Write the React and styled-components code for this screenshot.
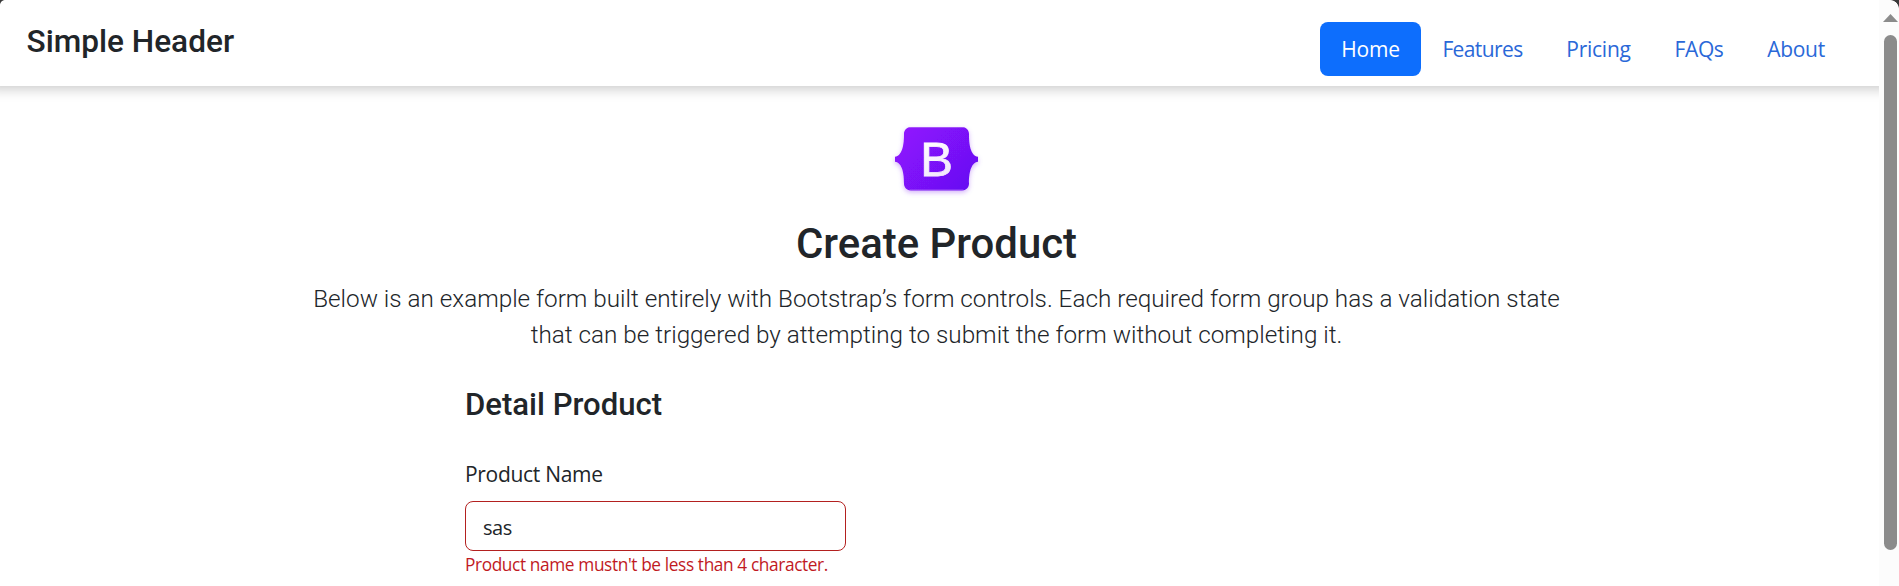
import React from "react";
import styled, { createGlobalStyle } from "styled-components";

const GlobalStyle = createGlobalStyle`
  * { box-sizing: border-box; }
  body { margin: 0; background: #fff; color: #212529; font-family: Roboto, "Liberation Sans", sans-serif; overflow: hidden; }
  h1, h2, h3, p { margin: 0; }
`;

const Window = styled.div`
  position: relative;
  display: flex;
  height: 586px;
  overflow: hidden;
`;

const Page = styled.div`
  flex: 1;
  min-width: 0;
  overflow: hidden;
`;

const Header = styled.header`
  display: flex;
  justify-content: space-between;
  align-items: flex-start;
  height: 86px;
  padding: 22px 32px 0 26.5px;
  background: #fff;
  box-shadow: 0 -9px 12px 12px rgba(0, 0, 0, 0.21);
`;

const Brand = styled.h1`
  margin-top: 1px;
  font-size: 31.6px;
  font-weight: 500;
  line-height: 38px;
`;

const Nav = styled.nav`
  display: flex;
`;

const NavLink = styled.a`
  display: flex;
  align-items: center;
  justify-content: center;
  width: ${(p) => p.$width}px;
  height: 54px;
  border-radius: 8px;
  background: ${(p) => (p.$active ? "#0d6efd" : "transparent")};
  color: ${(p) => (p.$active ? "#fff" : "#2a68d8")};
  font: 21px/32px "Open Sans", "Noto Sans", sans-serif;
  letter-spacing: ${(p) => p.$spacing}px;
  text-decoration: none;
`;

const Main = styled.main`
  display: flex;
  flex-direction: column;
  align-items: center;
  padding: 35px 6px 0 0;
`;

const Logo = styled.svg`
  display: block;
  width: 104px;
  height: 84px;
`;

const Title = styled.h2`
  margin-top: 14px;
  font-size: 41.9px;
  font-weight: 500;
  line-height: 50px;
`;

const Lead = styled.p`
  width: 1290px;
  margin-top: 12px;
  font-size: 24.28px;
  font-weight: 300;
  line-height: 36px;
  text-align: center;
`;

const Form = styled.form`
  display: flex;
  flex-direction: column;
  width: 943px;
  margin-top: 33px;
`;

const SectionTitle = styled.h3`
  font-size: 31.1px;
  font-weight: 500;
  line-height: 38px;
`;

const Label = styled.label`
  margin-top: 34px;
  font: 21px/32px "Open Sans", "Noto Sans", sans-serif;
  letter-spacing: -0.3px;
`;

const Input = styled.input`
  width: 381px;
  height: 50px;
  margin-top: 11px;
  padding: 2px 17px 0;
  border: 1px solid #b3201f;
  border-radius: 8px;
  outline: none;
  background: #fff;
  color: #212529;
  font: 20px/32px "Open Sans", "Noto Sans", sans-serif;
  letter-spacing: -0.5px;
`;

const ErrorText = styled.p`
  margin-top: 1px;
  color: #c11a1f;
  font: 17.3px/26px "Open Sans", "Noto Sans", sans-serif;
  letter-spacing: -0.39px;
`;

const Scrollbar = styled.div`
  display: flex;
  flex-direction: column;
  align-items: center;
  width: 20px;
  padding: 14px 0 0 3px;
  background: #fcfcfc;
`;

const UpArrow = styled.svg`
  display: block;
  width: 15px;
  height: 8px;
`;

const Thumb = styled.div`
  width: 13px;
  height: 515px;
  margin-top: 13px;
  border-radius: 7px;
  background: #8b8b8b;
`;

const Corner = styled.div`
  position: absolute;
  top: 0;
  ${(p) => p.$side}: 0;
  width: ${(p) => p.$size}px;
  height: ${(p) => p.$size}px;
  background: radial-gradient(
    circle at ${(p) => (p.$side === "left" ? "100%" : "0")} 100%,
    transparent ${(p) => p.$size - 0.5}px,
    #3a3a3a ${(p) => p.$size + 0.3}px
  );
`;

const links = [
  { label: "Home", width: 101, spacing: -0.2, active: true },
  { label: "Features", width: 123, spacing: -0.6 },
  { label: "Pricing", width: 109, spacing: -0.25 },
  { label: "FAQs", width: 92, spacing: -0.4 },
  { label: "About", width: 102, spacing: -0.3 },
];

function BootstrapLogo() {
  return (
    <Logo viewBox="0 0 104 84" aria-label="Bootstrap">
      <defs>
        <linearGradient id="body" x1="20" y1="8" x2="84" y2="72" gradientUnits="userSpaceOnUse">
          <stop stopColor="#9013fe" />
          <stop offset="1" stopColor="#6610f2" />
        </linearGradient>
        <linearGradient id="letter" x1="40" y1="20" x2="60" y2="58" gradientUnits="userSpaceOnUse">
          <stop stopColor="#fff" />
          <stop offset="1" stopColor="#f1e5fc" />
        </linearGradient>
        <filter id="glow" x="-20%" y="-20%" width="140%" height="150%">
          <feDropShadow dx="0" dy="2" stdDeviation="2.5" floodColor="#7010f0" floodOpacity="0.3" />
        </filter>
      </defs>
      <g transform="translate(-0.5 -0.5)">
        <path
          filter="url(#glow)"
          fill="url(#body)"
          d="M26.5 6.5H77.5C81.5 6.5 84.5 9.5 84.5 13.5C84.3 23 86 35.500 93.5 36.3V41.2C86 42 84.3 54 84.5 63C84.5 67 81.5 70 77.5 70H26.5C22.5 70 19.5 67 19.5 63C19.7 54 18 42 10.5 41.2V36.3C18 35.5 19.7 23 19.5 13.5C19.5 9.5 22.5 6.5 26.5 6.5Z"
        />
        <path fill="none" stroke="#b46cf8" strokeWidth="1" strokeOpacity="0.7" d="M25 7H79M25 69.5H79" />
      </g>
      <text x="35.3" y="55" fontFamily="Liberation Sans, Arial, sans-serif" fontSize="49" fill="url(#letter)" stroke="url(#letter)" strokeWidth="0.8">
        B
      </text>
    </Logo>
  );
}

export default function App() {
  return (
    <Window>
      <GlobalStyle />
      <Page>
        <Header>
          <Brand>Simple Header</Brand>
          <Nav>
            {links.map((l) => (
              <NavLink key={l.label} $width={l.width} $spacing={l.spacing} $active={l.active}>
                {l.label}
              </NavLink>
            ))}
          </Nav>
        </Header>
        <Main>
          <BootstrapLogo />
          <Title>Create Product</Title>
          <Lead>
            Below is an example form built entirely with Bootstrap’s form controls. Each required form group has a
            validation state that can be triggered by attempting to submit the form without completing it.
          </Lead>
          <Form>
            <SectionTitle>Detail Product</SectionTitle>
            <Label htmlFor="name">Product Name</Label>
            <Input id="name" defaultValue="sas" />
            <ErrorText>Product name mustn't be less than 4 character.</ErrorText>
          </Form>
        </Main>
      </Page>
      <Scrollbar>
        <UpArrow viewBox="0 0 15 8">
          <path d="M7.5 0L15 8H0Z" fill="#8b8b8b" />
        </UpArrow>
        <Thumb />
      </Scrollbar>
      <Corner $side="left" $size={5} />
      <Corner $side="right" $size={9} />
    </Window>
  );
}
